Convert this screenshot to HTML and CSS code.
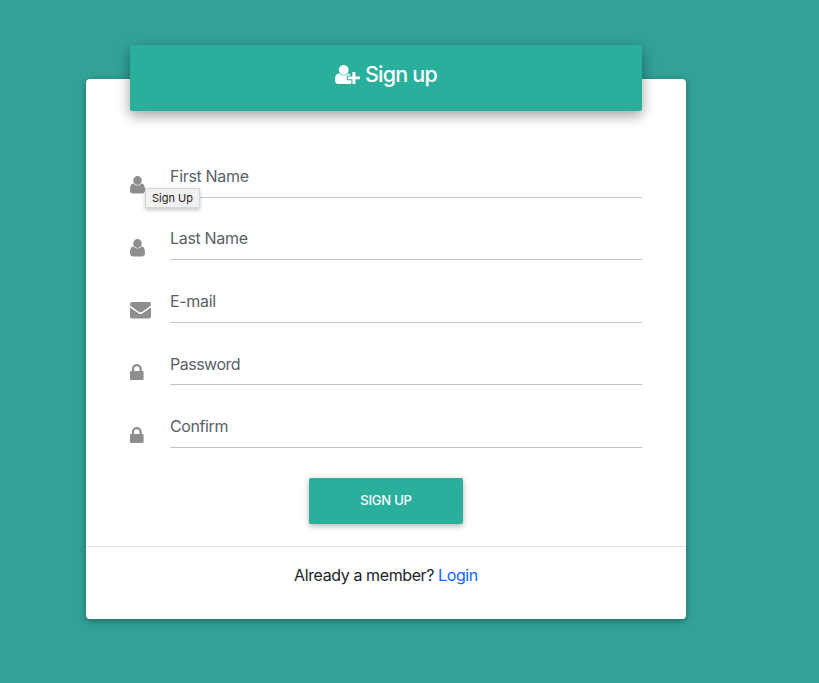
FILE: index.html
```html
<!DOCTYPE html>
<html lang="en">
<head>
<meta charset="utf-8">
<title>Sign up</title>
<link rel="stylesheet" href="styles.css">
</head>
<body>
<svg class="defs" width="0" height="0" aria-hidden="true">
  <symbol id="user" viewBox="0 0 15 18"><ellipse cx="7.5" cy="4.5" rx="4.3" ry="4.4"/><path d="M3.5 7.6C1 7.6 0 10.4 0 14.2C0 16.3 1.2 17.5 3 17.5H12C13.8 17.5 15 16.3 15 14.2C15 10.4 14 7.6 11.5 7.6C10.3 8.9 9.2 9.5 7.5 9.5S4.7 8.9 3.5 7.6Z"/></symbol>
  <symbol id="mail" viewBox="0 0 21 17"><path d="M2 0H19A2 2 0 0 1 21 2C21 3.3 20 4.4 19 5.1L13 9.3C12.2 9.9 11.4 10.5 10.5 10.5S8.8 9.9 8 9.3L2 5.1C1 4.4 0 3.2 0 2A2 2 0 0 1 2 0Z"/><path d="M0 5.4L7.3 10.5C8.3 11.3 9.4 12 10.5 12S12.7 11.3 13.7 10.5L21 5.4V14.5A2 2 0 0 1 19 16.5H2A2 2 0 0 1 0 14.5Z"/></symbol>
  <symbol id="lock" viewBox="0 0 14 16"><path fill-rule="evenodd" d="M1.8 7V5A5 5 0 0 1 11.8 5V7H12.4A1.2 1.2 0 0 1 13.6 8.2V14.8A1.2 1.2 0 0 1 12.4 16H1.2A1.2 1.2 0 0 1 0 14.8V8.2A1.2 1.2 0 0 1 1.2 7ZM4.1 7H9.5V5A2.7 2.7 0 0 0 4.1 5Z"/></symbol>
</svg>
<main class="card">
  <header class="banner">
    <svg class="add-user" viewBox="0 0 25 20"><ellipse cx="8.7" cy="5" rx="4.9" ry="4.9"/><path d="M4 8.6C1.2 8.6 0 11.4 0 15.1C0 17.7 1.3 19 3.3 19H14.2C15.2 19 15.9 18.8 16.4 18.4V15.2H11.8V10.5H15.6C15 9.3 14.4 8.8 13.4 8.6C11.8 9.9 10.2 10.5 8.7 10.5S5.5 9.9 4 8.6Z"/><path d="M17.4 7H20.4V11.4H25V14.3H20.4V19H17.4V14.3H12.8V11.4H17.4Z"/></svg>
    <h1>Sign up</h1>
  </header>
  <form class="form">
    <div class="row"><svg class="icon user"><use href="#user"/></svg><label class="field"><span>First Name</span></label><span class="tooltip">Sign Up</span></div>
    <div class="row"><svg class="icon user"><use href="#user"/></svg><label class="field"><span>Last Name</span></label></div>
    <div class="row"><svg class="icon mail"><use href="#mail"/></svg><label class="field"><span>E-mail</span></label></div>
    <div class="row"><svg class="icon lock"><use href="#lock"/></svg><label class="field password"><span>Password</span></label></div>
    <div class="row"><svg class="icon lock"><use href="#lock"/></svg><label class="field confirm"><span>Confirm</span></label></div>
    <button type="button" class="submit">SIGN UP</button>
  </form>
  <footer class="footer"><span>Already a member? <a href="#">Login</a></span></footer>
</main>
</body>
</html>
```

FILE: styles.css
```css
* { box-sizing: border-box; }
body {
  margin: 0;
  min-height: 683px;
  padding: 79px 0 0 86px;
  background: #32a298;
  font: 16px/24px Inter, "Liberation Sans", sans-serif;
  letter-spacing: -0.4px;
  color: #212529;
}
.defs { position: absolute; }
.card {
  width: 600px;
  height: 540px;
  display: flex;
  flex-direction: column;
  border-radius: 4px;
  background: #fff;
  box-shadow: 0 2px 5px rgba(0,0,0,.16), 0 2px 10px rgba(0,0,0,.22);
}
.banner {
  flex: none;
  width: 512px;
  height: 66px;
  margin: -34px auto 0;
  padding-bottom: 7px;
  display: flex;
  align-items: center;
  justify-content: center;
  gap: 5px;
  border-radius: 2px;
  background: #2aaf9d;
  color: #fff;
  box-shadow: 0 5px 11px rgba(0,0,0,.18), 0 4px 15px rgba(0,0,0,.22);
}
.add-user { width: 25px; height: 20px; fill: #fff; }
h1 { margin: 0; font-size: 21.5px; font-weight: 500; line-height: 28px; letter-spacing: -.8px; position: relative; top: -.5px; }
.form { display: flex; flex-direction: column; padding: 43.4px 44px 0; }
.row { position: relative; display: flex; height: 62.5px; }
.icon { flex: none; fill: #8e8e8e; }
.user { width: 15px; height: 18px; margin: 22px 25px 0 0; }
.mail { width: 21px; height: 17px; margin: 22.3px 19px 0 0; }
.lock { width: 14px; height: 16px; margin: 22.3px 26px 0 0; }
.field { flex: 1; height: 43.5px; padding-top: 9.5px; border-bottom: 1px solid #c1c6ce; color: #596168; letter-spacing: -.32px; }
.password { padding-top: 10.2px; letter-spacing: -.5px; }
.confirm { letter-spacing: -.4px; }
.tooltip {
  position: absolute;
  left: 15px;
  top: 34px;
  width: 55px;
  height: 20px;
  border: 1px solid #d6d6d6;
  background: #f0f0f0;
  box-shadow: 0 2px 4px rgba(0,0,0,.22);
  color: #242424;
  font-size: 11px;
  line-height: 18px;
  text-align: center;
  letter-spacing: 0;
}
.submit {
  width: 154px;
  height: 46px;
  margin: 11.1px auto 0;
  padding: 0 0 2px;
  border: 0;
  border-radius: 2px;
  background: #2aaf9d;
  color: #fff;
  box-shadow: 0 2px 5px rgba(0,0,0,.2), 0 2px 8px rgba(0,0,0,.13);
  font: 500 13px/20px Inter, "Liberation Sans", sans-serif;
  letter-spacing: -.2px;
}
.footer { margin-top: 22px; height: 73px; border-top: 1px solid #e0e4ea; padding-top: 16px; text-align: center; }
a { color: #0d66fd; text-decoration: none; }
```
